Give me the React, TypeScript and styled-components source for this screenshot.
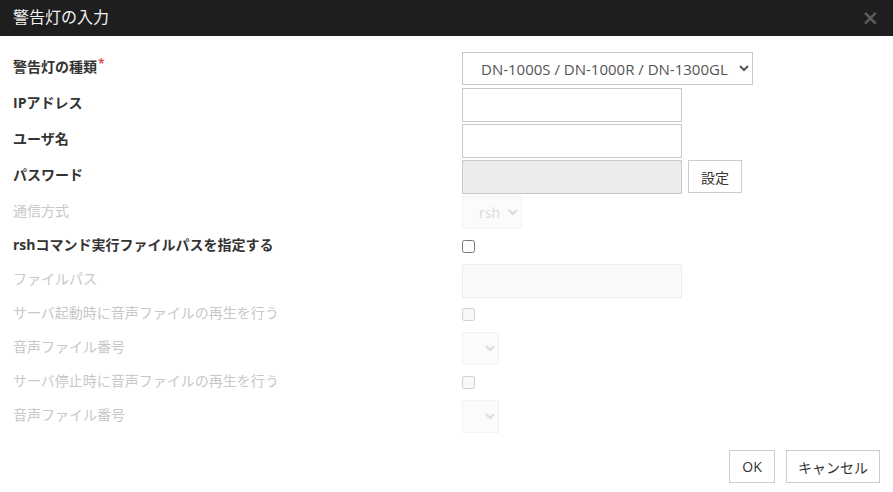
import React from "react";
import styled, { createGlobalStyle } from "styled-components";

const FONT = `"Open Sans", "Noto Sans CJK JP", sans-serif`;

const GlobalStyle = createGlobalStyle`
  body {
    margin: 0;
    background: #fff;
    font-family: ${FONT};
  }
`;

const Dialog = styled.div`
  width: 893px;
  height: 492px;
  background: #fff;
  display: flex;
  flex-direction: column;
`;

const Header = styled.div`
  height: 36px;
  background: #1e1e1e;
  display: flex;
  align-items: center;
  justify-content: space-between;
  padding: 0 14px 0 13px;
`;

const Title = styled.div`
  color: #f2f2f2;
  font-size: 16px;
  line-height: 1;
  margin-top: -2px;
`;

const Close = styled.div`
  color: #5c5c5c;
  font-size: 21px;
  font-weight: bold;
  font-family: "DejaVu Sans", sans-serif;
  line-height: 1;
`;

const Form = styled.div`
  display: grid;
  grid-template-columns: 449px 1fr;
  row-gap: 3px;
  padding: 16px 13px 0 13px;
`;

const Label = styled.div<{ $disabled?: boolean; $h?: number }>`
  height: ${(p) => p.$h ?? 33}px;
  display: flex;
  align-items: center;
  font-size: 14px;
  line-height: 1;
  margin-top: -2px;
  font-weight: ${(p) => (p.$disabled ? "normal" : "bold")};
  color: ${(p) => (p.$disabled ? "#c8c8c8" : "#333")};
`;

const Req = styled.span`
  color: #d9534f;
  font-size: 12px;
  align-self: flex-start;
  margin-top: 8px;
  margin-left: 1px;
`;

const Cell = styled.div<{ $h?: number }>`
  height: ${(p) => p.$h ?? 33}px;
  display: flex;
  align-items: center;
  gap: 6px;
`;

const Select = styled.select<{ $w: number }>`
  width: ${(p) => p.$w}px;
  height: 33px;
  border: 1px solid #c8c8c8;
  background: #fff;
  color: #555;
  font-family: ${FONT};
  font-size: 15px;
  padding: 0 2px 0 14px;
  border-radius: 0;
  &:disabled {
    border-color: #eee;
    background: #fafafa;
    color: #ccc;
    font-size: 14px;
    padding-left: 12px;
  }
`;

const Input = styled.input<{ $gray?: boolean }>`
  width: 220px;
  height: 34px;
  box-sizing: border-box;
  border: 1px solid #c8c8c8;
  background: ${(p) => (p.$gray ? "#ececec" : "#fff")};
  border-radius: 0;
  &:disabled {
    border-color: #eee;
    background: #fafafa;
  }
`;

const Check = styled.input`
  width: 13px;
  height: 13px;
  margin: 0;
`;

const Button = styled.button<{ $w: number }>`
  width: ${(p) => p.$w}px;
  height: 33px;
  border: 1px solid #ccc;
  background: #fff;
  color: #333;
  font-family: ${FONT};
  font-size: 14px;
  padding: 0;
  border-radius: 0;
`;

const Footer = styled.div`
  display: flex;
  justify-content: flex-end;
  gap: 11px;
  padding: 17px 13px 0 0;
`;

export default function App() {
  return (
    <Dialog>
      <GlobalStyle />
      <Header>
        <Title>警告灯の入力</Title>
        <Close>×</Close>
      </Header>
      <Form>
        <Label>
          警告灯の種類<Req>*</Req>
        </Label>
        <Cell>
          <Select $w={291} defaultValue="dn">
            <option value="dn">DN-1000S / DN-1000R / DN-1300GL</option>
          </Select>
        </Cell>

        <Label>IPアドレス</Label>
        <Cell>
          <Input />
        </Cell>

        <Label>ユーザ名</Label>
        <Cell>
          <Input />
        </Cell>

        <Label>パスワード</Label>
        <Cell>
          <Input $gray readOnly />
          <Button $w={54}>設定</Button>
        </Cell>

        <Label $disabled>通信方式</Label>
        <Cell>
          <Select $w={60} disabled defaultValue="rsh">
            <option value="rsh">rsh</option>
          </Select>
        </Cell>

        <Label $h={29}>rshコマンド実行ファイルパスを指定する</Label>
        <Cell $h={29}>
          <Check type="checkbox" />
        </Cell>

        <Label $disabled>ファイルパス</Label>
        <Cell>
          <Input disabled />
        </Cell>

        <Label $disabled $h={29}>
          サーバ起動時に音声ファイルの再生を行う
        </Label>
        <Cell $h={29}>
          <Check type="checkbox" disabled />
        </Cell>

        <Label $disabled>音声ファイル番号</Label>
        <Cell>
          <Select $w={37} disabled defaultValue="">
            <option value=""></option>
          </Select>
        </Cell>

        <Label $disabled $h={29}>
          サーバ停止時に音声ファイルの再生を行う
        </Label>
        <Cell $h={29}>
          <Check type="checkbox" disabled />
        </Cell>

        <Label $disabled>音声ファイル番号</Label>
        <Cell>
          <Select $w={37} disabled defaultValue="">
            <option value=""></option>
          </Select>
        </Cell>
      </Form>
      <Footer>
        <Button $w={46}>OK</Button>
        <Button $w={94}>キャンセル</Button>
      </Footer>
    </Dialog>
  );
}
